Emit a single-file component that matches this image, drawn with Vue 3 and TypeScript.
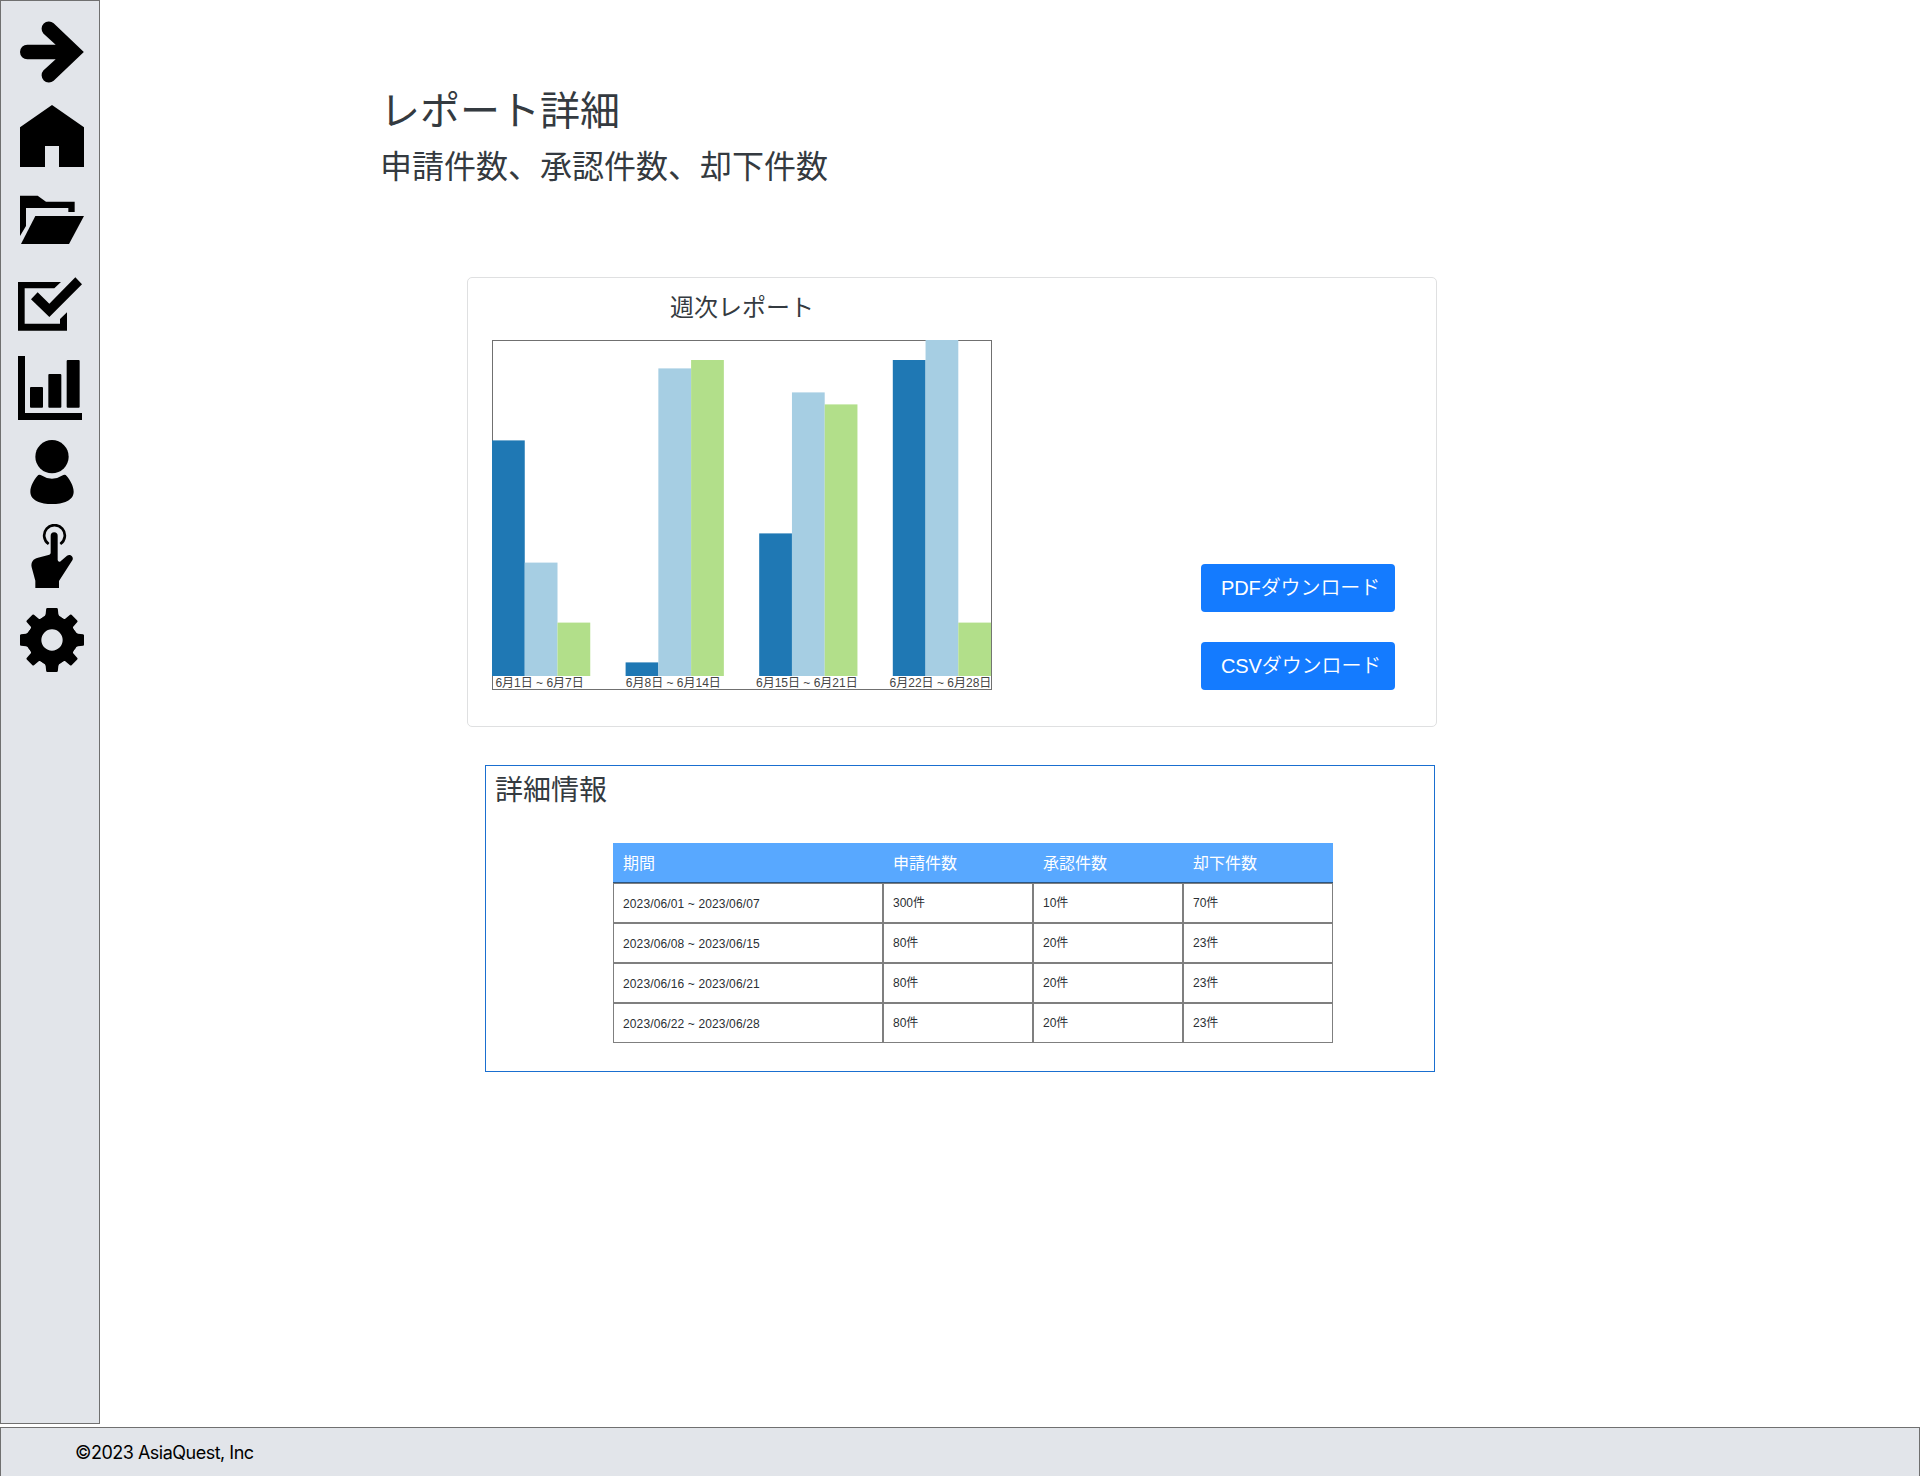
<script setup lang="ts">
interface Bar {
  x: number
  y: number
  w: number
  color: string
}

interface Row {
  period: string
  applied: string
  approved: string
  rejected: string
}

const BASELINE = 336
const COLORS = ['#1f78b4', '#a6cee3', '#b2df8a']
const GROUP_PITCH = 133.6
const BAR_WIDTH = 32.75

const tops: number[][] = [
  [100.4, 222.6, 282.6],
  [322.4, 28.4, 20],
  [193.4, 52.4, 64.4],
  [20, 0, 282.6],
]

const bars: Bar[] = tops.flatMap((group, g) =>
  group.map((y, i) => ({
    x: g * GROUP_PITCH + i * BAR_WIDTH,
    y,
    w: BAR_WIDTH,
    color: COLORS[i],
  })),
)

const labels = [
  { x: 3.4, text: '6月1日 ~ 6月7日' },
  { x: 133.8, text: '6月8日 ~ 6月14日' },
  { x: 264, text: '6月15日 ~ 6月21日' },
  { x: 397.6, text: '6月22日 ~ 6月28日' },
]

const rows: Row[] = [
  { period: '2023/06/01 ~ 2023/06/07', applied: '300件', approved: '10件', rejected: '70件' },
  { period: '2023/06/08 ~ 2023/06/15', applied: '80件', approved: '20件', rejected: '23件' },
  { period: '2023/06/16 ~ 2023/06/21', applied: '80件', approved: '20件', rejected: '23件' },
  { period: '2023/06/22 ~ 2023/06/28', applied: '80件', approved: '20件', rejected: '23件' },
]
</script>

<template>
  <div class="page">
    <div class="body">
      <nav class="sidebar">
        <svg class="icon" viewBox="0 0 192 192">
          <path d="M101 9.500L191.500 96L101 182.500A22 22 0 0 1 70 151.500L107 118H22A22 22 0 0 1 22 74H107L70 40.500A22 22 0 0 1 101 9.500Z" />
        </svg>
        <svg class="icon" viewBox="0 0 192 192">
          <path d="M96 3L192 70V189H117V126H75V189H0V70Z" />
        </svg>
        <svg class="icon" viewBox="0 0 192 192">
          <path d="M0 23H53L78 41H164V72H145V60H18V114L0 144Z" />
          <path d="M46 84H192L147 168H3Z" />
        </svg>
        <svg class="icon shifted" viewBox="0 0 192 192">
          <path d="M0 30H129L109 49H20V155H126V141L147 121V176H0Z" />
          <path d="M172 16L192 37L94 135L39 82L59 61L94 95Z" />
        </svg>
        <svg class="icon shifted" viewBox="0 0 192 192">
          <path d="M0 0H21V171H192V192H0Z" />
          <rect x="36" y="93" width="39" height="62" rx="3" />
          <rect x="91" y="54" width="39" height="101" rx="3" />
          <rect x="146" y="12" width="39" height="143" rx="3" />
        </svg>
        <svg class="icon" viewBox="0 0 192 192">
          <circle cx="96" cy="50" r="50" />
          <path d="M62 105Q96 127 130 105Q136 102 140 108C150 120 161 138 161 155C161 182 129 192 96 192C63 192 31 182 31 155C31 138 42 120 52 108Q56 102 62 105Z" />
        </svg>
        <svg class="icon" viewBox="0 0 192 192">
          <path d="M86 60A31 31 0 1 1 121 60" fill="none" stroke="#000" stroke-width="8" />
          <path d="M92 35A10.500 10.500 0 0 1 113 35V108Q114 114 120 113L141 95C150 88 163 98 157 109L117 171V192H46V170L35 130C32 114 40 104 54 101L88 92Q92 91 92 86Z" />
        </svg>
        <svg class="icon" viewBox="0 0 192 192">
          <circle cx="96" cy="96" r="52.500" fill="none" stroke="#000" stroke-width="41" />
          <path
            v-for="n in 8"
            :key="n"
            :transform="`rotate(${n * 45} 96 96)`"
            :d="n % 2 ? 'M80.500 4Q81 1 84 1H108Q111 1 111.500 4L113 24L124 36H68L79 24Z' : 'M78.500 3Q79 0 82 0H110Q113 0 113.500 3L115 18Q116 24 122 26L130 34H62L70 26Q76 24 77 18Z'"
          />
        </svg>
      </nav>

      <main class="main">
        <h1 class="title">レポート詳細</h1>
        <h2 class="subtitle">申請件数、承認件数、却下件数</h2>

        <section class="card">
          <div class="chart-area">
            <h3 class="card-title">週次レポート</h3>
            <svg class="chart" width="500" height="350" viewBox="0 0 500 350">
              <rect class="frame" x="0.500" y="0.500" width="499" height="349" />
              <rect
                v-for="(bar, i) in bars"
                :key="i"
                :x="bar.x"
                :y="bar.y"
                :width="bar.w"
                :height="BASELINE - bar.y"
                :fill="bar.color"
              />
              <text v-for="label in labels" :key="label.text" class="tick" :x="label.x" y="347">{{ label.text }}</text>
            </svg>
          </div>
          <div class="actions">
            <button class="button">PDFダウンロード</button>
            <button class="button">CSVダウンロード</button>
          </div>
        </section>

        <section class="details">
          <h3 class="details-title">詳細情報</h3>
          <div class="table">
            <div class="row head">
              <div class="cell period">期間</div>
              <div class="cell">申請件数</div>
              <div class="cell">承認件数</div>
              <div class="cell">却下件数</div>
            </div>
            <div v-for="row in rows" :key="row.period" class="row">
              <div class="cell period">{{ row.period }}</div>
              <div class="cell">{{ row.applied }}</div>
              <div class="cell">{{ row.approved }}</div>
              <div class="cell">{{ row.rejected }}</div>
            </div>
          </div>
        </section>
      </main>
    </div>
    <footer class="footer">©2023 AsiaQuest, Inc</footer>
  </div>
</template>

<style>
body {
  background: #fff;
}
</style>

<style scoped>
.page {
  box-sizing: border-box;
  width: 1920px;
  height: 1476px;
  overflow: hidden;
  display: flex;
  flex-direction: column;
  gap: 3px;
  font-family: "Liberation Sans", "Noto Sans CJK JP", sans-serif;
  color: #343a40;
}
.page * {
  box-sizing: border-box;
}
.body {
  display: flex;
  height: 1424px;
}
.sidebar {
  flex: none;
  width: 100px;
  border: 1px solid #707070;
  background: #e2e5ea;
  padding: 19px 0 0 19px;
  display: flex;
  flex-direction: column;
  gap: 20px;
}
.icon {
  width: 64px;
  height: 64px;
  flex: none;
}
.icon.shifted {
  margin-left: -2px;
}
h1,
h2,
h3 {
  margin: 0;
  font-weight: 400;
}
.main {
  flex: 1;
  padding: 87px 0 0 280px;
}
.title {
  font-size: 40px;
  line-height: 48px;
}
.subtitle {
  margin-top: 12px;
  font-size: 32px;
  line-height: 40px;
}
.card {
  margin: 90px 0 0 87px;
  width: 970px;
  height: 450px;
  border: 1px solid #dfe0e1;
  border-radius: 5px;
  padding: 15px 41px 36px 24px;
  display: flex;
  justify-content: space-between;
}
.card-title {
  font-size: 24px;
  line-height: 30px;
  height: 47px;
  text-align: center;
}
.chart {
  display: block;
}
.frame {
  fill: #fff;
  stroke: #707070;
}
.tick {
  font-size: 12px;
  fill: #444;
}
.actions {
  display: flex;
  flex-direction: column;
  justify-content: flex-end;
  gap: 30px;
}
.button {
  width: 194px;
  height: 48px;
  border: 0;
  border-radius: 4px;
  background: #147bff;
  color: #fff;
  font-family: inherit;
  font-size: 20px;
  font-weight: 350;
  letter-spacing: -0.1px;
  line-height: 48px;
  padding: 0 0 0 20px;
  text-align: left;
  white-space: nowrap;
}
.details {
  margin: 38px 0 0 105px;
  width: 950px;
  height: 307px;
  border: 1px solid #1a6fd0;
  padding: 7px 0 0 9px;
}
.details-title {
  font-size: 28px;
  line-height: 36px;
}
.table {
  margin: 34px 0 0 118px;
  width: 720px;
}
.row {
  display: grid;
  grid-template-columns: 270px 150px 150px 150px;
  height: 40px;
}
.cell {
  height: 40px;
  border: 1px solid #7f7f7f;
  padding: 1px 0 0 9px;
  font-size: 12px;
  line-height: 36px;
  color: #2a2f34;
}
.cell.period {
  padding-top: 2px;
  letter-spacing: 0.13px;
}
.head .cell {
  border: 0;
  border-bottom: 1px solid #2c5580;
  padding: 2px 0 0 10px;
  background: #58a8ff;
  color: #fff;
  font-size: 16px;
  line-height: 37px;
}
.head .cell.period {
  padding-top: 3px;
  line-height: 36px;
  letter-spacing: 0;
}
.footer {
  height: 49px;
  border: 1px solid #707070;
  border-bottom: 0;
  background: #e2e5ea;
  padding-left: 74px;
  font-family: Inter, sans-serif;
  font-size: 18px;
  letter-spacing: -0.5px;
  line-height: 50px;
  color: #000;
}
</style>
